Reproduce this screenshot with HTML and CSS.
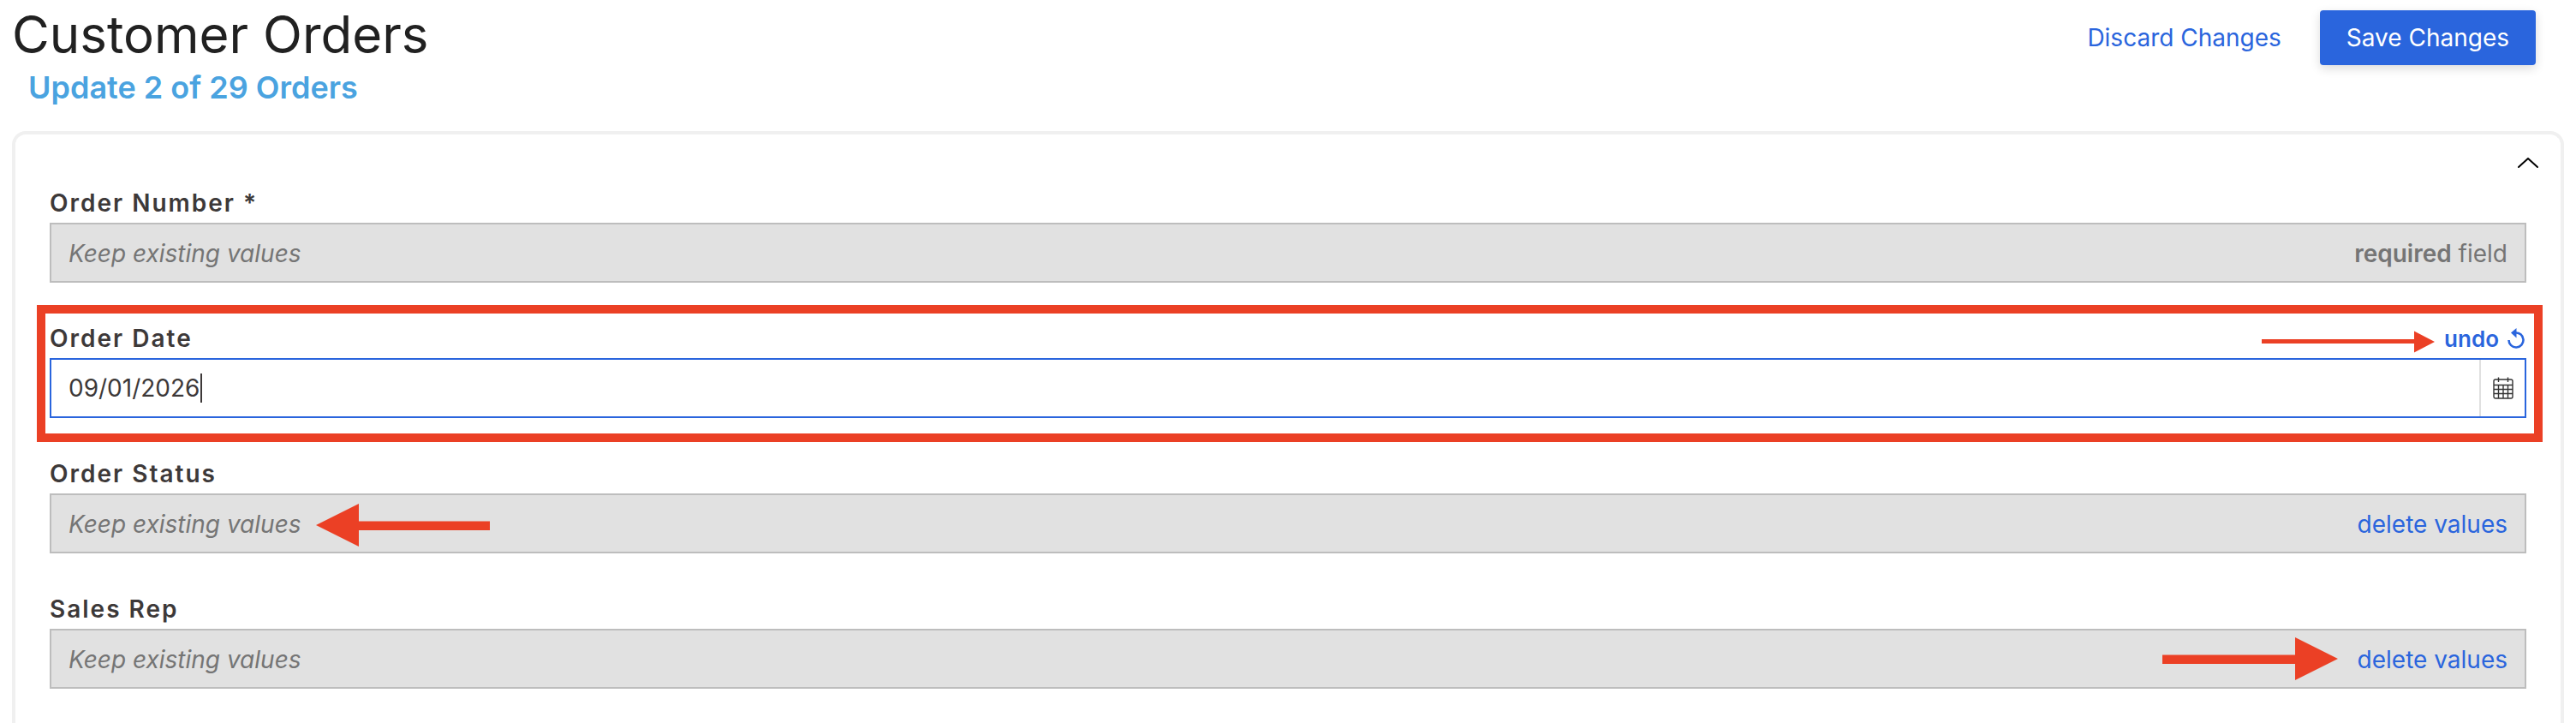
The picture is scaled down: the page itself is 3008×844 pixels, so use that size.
FILE: index.html
```
<!DOCTYPE html>
<html lang="en">

<head>
    <meta charset="UTF-8">
    <meta name="viewport" content="width=device-width, initial-scale=1.0">
    <title>Customer Orders</title>
    <link rel="stylesheet" href="styles.css">
</head>

<body>
    <header class="page-header">
        <div class="page-titles">
            <h1>Customer Orders</h1>
            <h2>Update 2 of 29 Orders</h2>
        </div>
        <div class="page-actions">
            <button type="button" class="btn btn-link">Discard Changes</button>
            <button type="submit" form="order-form" class="btn btn-primary">Save Changes</button>
        </div>
    </header>

    <form class="card" id="order-form">
        <button type="button" class="collapse" aria-label="Collapse section">
            <svg width="28" height="16" viewBox="0 0 28 16" fill="none" stroke="#000" stroke-width="2" stroke-linecap="round" stroke-linejoin="round">
                <path d="M3 13L14 3L25 13" />
            </svg>
        </button>

        <div class="field">
            <div class="field-label">
                <label for="order-number">Order Number *</label>
            </div>
            <div class="field-box keep">
                <input type="text" id="order-number" placeholder="Keep existing values">
                <span class="hint"><b>required</b> field</span>
            </div>
        </div>

        <div class="field">
            <div class="field-label">
                <label for="order-date">Order Date</label>
                <button type="button" class="undo">undo
                    <svg width="20" height="26" viewBox="0 0 20 26" fill="none">
                        <path d="M9 6.5A8.5 8.5 0 1 1 1.5 15" stroke="currentColor" stroke-width="2.6" />
                        <path d="M4 6.5L10.5 1V12.5Z" fill="currentColor" />
                    </svg>
                </button>
            </div>
            <div class="field-box editing">
                <input type="text" id="order-date" value="09/01/2026">
                <span class="caret"></span>
                <button type="button" class="calendar" aria-label="Pick a date">
                    <svg width="24" height="26" viewBox="0 0 24 26" fill="none" stroke="#333" stroke-width="1.4">
                        <rect x="1" y="3" width="22" height="22" rx="2" />
                        <path d="M1 9.5H23M1 14.5H23M1 19.5H23M6.5 9.5V25M12 9.5V25M17.5 9.5V25M6.5 0.5V6M17.5 0.5V6" />
                    </svg>
                </button>
            </div>
            <div class="highlight"></div>
            <svg class="arrow arrow-undo" width="202" height="26" viewBox="0 0 202 26" fill="#eb4025">
                <path d="M0 10H178V0.5L202 13L178 25.5V15H0Z" />
            </svg>
        </div>

        <div class="field">
            <div class="field-label">
                <label for="order-status">Order Status</label>
            </div>
            <div class="field-box keep">
                <input type="text" id="order-status" placeholder="Keep existing values">
                <button type="button" class="delete">delete values</button>
            </div>
            <svg class="arrow arrow-keep" width="203" height="52" viewBox="0 0 203 52" fill="#eb4025">
                <path d="M203 20.5H50V0L0 25L50 50V31H203Z" />
            </svg>
        </div>

        <div class="field">
            <div class="field-label">
                <label for="sales-rep">Sales Rep</label>
            </div>
            <div class="field-box keep">
                <input type="text" id="sales-rep" placeholder="Keep existing values">
                <button type="button" class="delete">delete values</button>
            </div>
            <svg class="arrow arrow-delete" width="205" height="52" viewBox="0 0 205 52" fill="#eb4025">
                <path d="M0 21.5H155V1L205 26L155 51V32H0Z" />
            </svg>
        </div>
    </form>
</body>

</html>
```
FILE: styles.css
```
* {
    box-sizing: border-box;
}

body {
    margin: 0;
    padding: 0 14px;
    min-height: 100vh;
    display: flex;
    flex-direction: column;
    background-color: #fff;
    color: #3d3939;
    font-family: Inter, sans-serif;
    font-size: 28px;
}

button,
input {
    font: inherit;
    color: inherit;
    letter-spacing: inherit;
    background: none;
    border: none;
    border-radius: 0;
    padding: 0;
    margin: 0;
}

button {
    cursor: pointer;
}

svg {
    display: block;
    flex: none;
}

.page-header {
    display: flex;
    justify-content: space-between;
    align-items: flex-start;
    padding: 4px 33px 25px 0;
}

h1,
h2 {
    margin: 0;
}

h1 {
    color: #212121;
    font-size: 60px;
    line-height: 72px;
    font-weight: 400;
}

h2 {
    padding-left: 19px;
    color: #4aa3e0;
    font-size: 36px;
    line-height: 52px;
    font-weight: 600;
}

.page-actions {
    display: flex;
    gap: 14px;
    padding-top: 8px;
}

.btn {
    height: 64px;
    padding: 0 31px;
    border-radius: 4px;
}

.btn-link {
    color: #2a65dd;
}

.btn-primary {
    background-color: #2a65dd;
    color: #fff;
    box-shadow: 0 4px 12px rgba(0, 0, 0, 0.14);
}

.card {
    flex: 1;
    display: flex;
    flex-direction: column;
    border: 4px solid #f0f0f0;
    border-bottom: none;
    border-radius: 16px 16px 0 0;
    padding: 25px 40px 0;
}

.collapse {
    align-self: flex-end;
    margin-right: -16px;
    margin-bottom: 18px;
}

.field {
    position: relative;
    margin-bottom: 44px;
}

.field:last-child {
    margin-bottom: 0;
}

.field-label {
    display: flex;
    justify-content: space-between;
    align-items: center;
    height: 44px;
    padding-bottom: 2px;
    font-weight: 600;
    letter-spacing: 2px;
}

.field-box {
    position: relative;
    display: flex;
    align-items: center;
    height: 70px;
    padding-left: 20px;
    border: 2px solid #bdbdbd;
}

.field-box input {
    flex: 1;
    min-width: 0;
    height: 100%;
    outline: none;
}

.field-box input::placeholder {
    color: #757575;
    opacity: 1;
    font-style: italic;
}

.keep {
    padding-top: 2px;
    padding-right: 20px;
    background-color: #e1e1e1;
}

.editing {
    border-color: #2a65dd;
}

.hint {
    color: #757575;
}

.hint b {
    font-weight: 600;
}

.delete {
    color: #2a65dd;
}

.undo {
    display: flex;
    align-items: center;
    gap: 10px;
    padding-right: 2px;
    color: #2a65dd;
    font-size: 26px;
    font-weight: 600;
    letter-spacing: normal;
}

.caret {
    position: absolute;
    left: 174px;
    top: 16px;
    width: 2px;
    height: 34px;
    background-color: #3d3939;
}

.calendar {
    display: flex;
    align-items: center;
    justify-content: center;
    width: 53px;
    height: 100%;
    border-left: 2px solid #e0e0e0;
}

/* callouts */
.highlight {
    position: absolute;
    inset: -18px -19px -28px -15px;
    border: 10px solid #eb4025;
    pointer-events: none;
}

.arrow {
    position: absolute;
    pointer-events: none;
}

.arrow-undo {
    top: 12px;
    right: 107px;
}

.arrow-keep {
    top: 56px;
    left: 311px;
}

.arrow-delete {
    top: 53px;
    right: 220px;
}
```
